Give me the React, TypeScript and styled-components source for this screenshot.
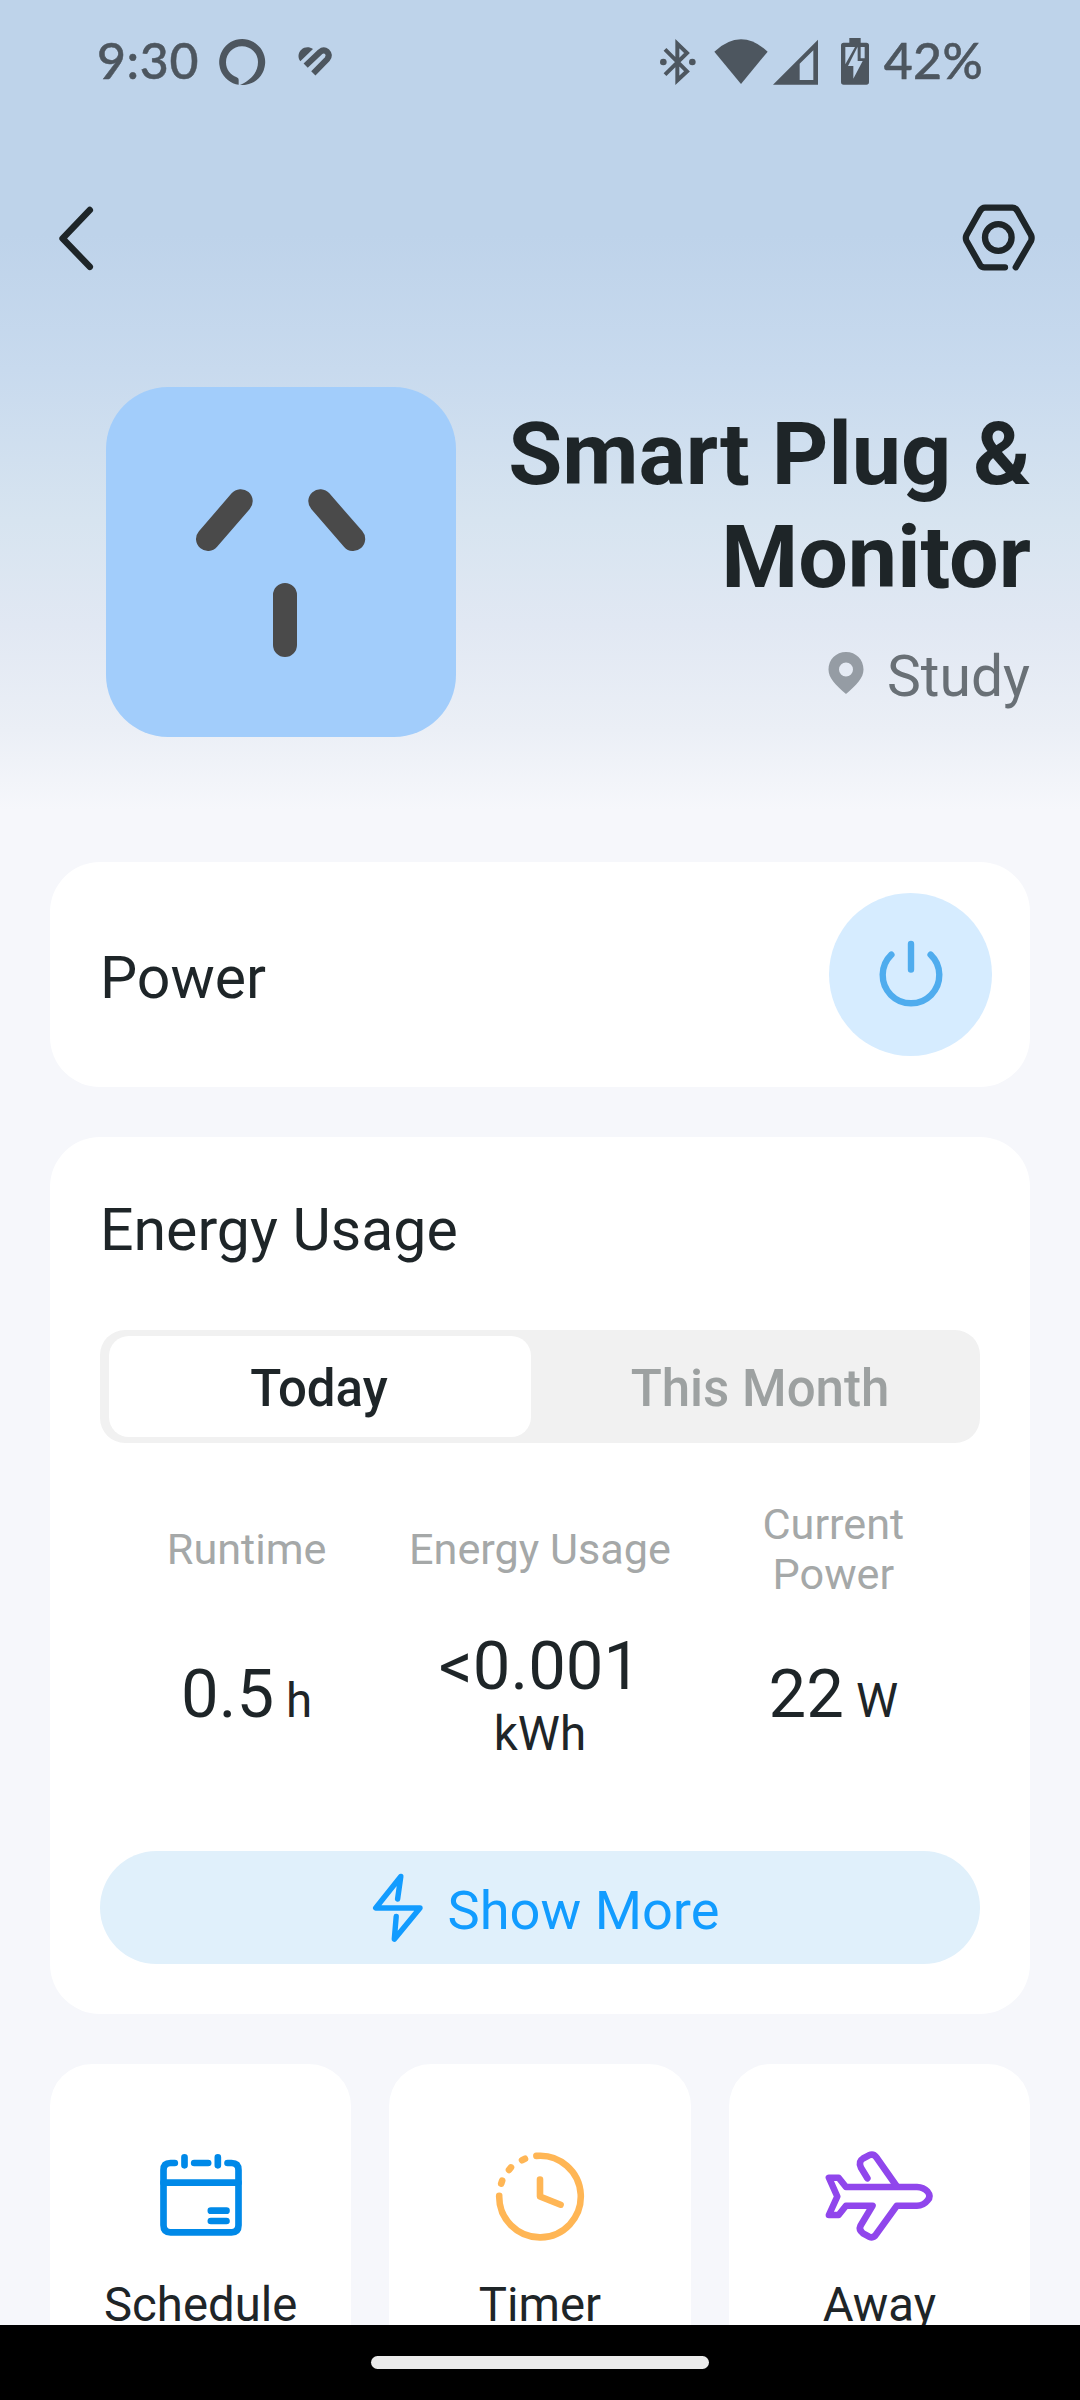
import React from "react";
import styled, { createGlobalStyle } from "styled-components";

const INK = "#1e2528";
const STATUS = "#4d565f";

const GlobalStyle = createGlobalStyle`
  *, *::before, *::after { box-sizing: border-box; }
  body { margin: 0; background: #f6f7fb; }
  button { border: 0; background: none; padding: 0; font: inherit; color: inherit; }
  svg { display: block; flex: none; overflow: visible; }
`;

const Screen = styled.div`
  width: 1080px;
  height: 2400px;
  overflow: hidden;
  display: flex;
  flex-direction: column;
  font-family: Roboto, "Liberation Sans", sans-serif;
  color: ${INK};
  background: linear-gradient(
    180deg,
    #bed3ea 0,
    #bed3ea 235px,
    #c8daee 370px,
    #d7e4f0 520px,
    #e1e8f3 625px,
    #ebeff6 730px,
    #f6f7fb 810px
  );
`;

const Content = styled.main`
  height: 2325px;
  flex: none;
  overflow: hidden;
`;

const StatusBar = styled.header`
  height: 124px;
  padding: 0 97px 1px 97px;
  display: flex;
  justify-content: space-between;
  align-items: center;
  color: ${STATUS};
`;

const StatusGroup = styled.div`
  display: flex;
  align-items: center;
`;

const StatusText = styled.span<{ $spacing?: number }>`
  display: block;
  padding-bottom: 3px;
  font-family: Lato, "Open Sans", sans-serif;
  font-weight: 500;
  font-size: 50px;
  line-height: 60px;
  letter-spacing: ${(p) => p.$spacing ?? 0}px;
  -webkit-text-stroke: 0.5px currentColor;
`;

const IconSlot = styled.span<{ $left: number }>`
  margin-left: ${(p) => p.$left}px;
`;

const NavRow = styled.nav`
  height: 228px;
  padding: 0 46px 0 59px;
  display: flex;
  justify-content: space-between;
  align-items: flex-start;
`;

const NavButton = styled.button<{ $top: number }>`
  padding-top: ${(p) => p.$top}px;
`;

const Hero = styled.section`
  height: 510px;
  padding: 35px 50px 0 106px;
  display: flex;
  justify-content: space-between;
  align-items: flex-start;
`;

const PlugTile = styled.div`
  width: 350px;
  height: 350px;
  border-radius: 62px;
  background: #a2cdfb;
`;

const HeroText = styled.div`
  padding-top: 15px;
  display: flex;
  flex-direction: column;
  align-items: flex-end;
`;

const Title = styled.h1`
  margin: 0 -1px 0 0;
  width: 540px;
  font-size: 88px;
  line-height: 103px;
  font-weight: 700;
  text-align: right;
`;

const Location = styled.div`
  margin-top: 35.6px;
  display: flex;
  align-items: center;
  gap: 23px;
  font-size: 57px;
  line-height: 66px;
  color: #697076;
`;

const PinSlot = styled.span`
  padding-bottom: 7px;
`;

const Card = styled.section`
  margin: 0 50px 50px;
  border-radius: 50px;
  background: #fff;
`;

const PowerCard = styled(Card)`
  height: 225px;
  padding: 0 38px 0 50px;
  display: flex;
  align-items: center;
  justify-content: space-between;
`;

const CardTitle = styled.h2`
  margin: 0;
  padding-top: 6px;
  font-size: 59px;
  line-height: 70px;
  font-weight: 400;
`;

const PowerButton = styled.button`
  width: 163px;
  height: 163px;
  border-radius: 50%;
  background: #d6ecff;
  display: flex;
  align-items: center;
  justify-content: center;
`;

const EnergyCard = styled(Card)`
  height: 877px;
  padding: 52px 50px 0;
`;

const Tabs = styled.div`
  margin-top: 65px;
  height: 113px;
  padding: 6px 9px;
  border-radius: 25px;
  background: #f1f1f1;
  display: flex;
`;

const Tab = styled.button<{ $active?: boolean }>`
  width: ${(p) => (p.$active ? "422px" : "auto")};
  flex: ${(p) => (p.$active ? "none" : "1")};
  padding: ${(p) => (p.$active ? "4px 2px 0 0" : "4px 0 0 18px")};
  border-radius: 20px;
  background: ${(p) => (p.$active ? "#fff" : "transparent")};
  color: ${(p) => (p.$active ? INK : "#9da1a1")};
  font-size: 51px;
  font-weight: 500;
  text-align: center;
`;

const Stats = styled.div`
  margin-top: 54px;
  display: grid;
  grid-template-columns: repeat(3, 1fr);
  grid-template-rows: 100px 136px;
  row-gap: 29px;
  align-items: center;
  justify-items: center;
`;

const StatLabel = styled.div<{ $narrow?: boolean }>`
  width: ${(p) => (p.$narrow ? "200px" : "auto")};
  padding-top: 5px;
  font-size: 43.2px;
  line-height: 50px;
  color: #a5a8a8;
  text-align: center;
`;

const StatValue = styled.div<{ $stacked?: boolean }>`
  padding-top: ${(p) => (p.$stacked ? 2 : 0)}px;
  display: flex;
  flex-direction: ${(p) => (p.$stacked ? "column" : "row")};
  align-items: ${(p) => (p.$stacked ? "center" : "baseline")};
  gap: ${(p) => (p.$stacked ? 1 : 12)}px;
  font-size: 67px;
  line-height: 78px;
`;

const Unit = styled.span`
  font-size: 47.5px;
  line-height: 57px;
`;

const ShowMore = styled.button`
  margin-top: 89px;
  padding-left: 12px;
  width: 100%;
  height: 113px;
  border-radius: 57px;
  background: #e0f0fb;
  color: #129cff;
  display: flex;
  align-items: center;
  justify-content: center;
  gap: 25px;
  font-size: 54.2px;
`;

const ShowMoreText = styled.span`
  padding-top: 6px;
  line-height: 64px;
`;

const Actions = styled.div`
  padding: 0 50px;
  display: grid;
  grid-template-columns: repeat(3, 1fr);
  gap: 38px;
`;

const ActionTile = styled.button`
  height: 301px;
  padding-top: 82px;
  border-radius: 42px;
  background: #fff;
  display: flex;
  flex-direction: column;
  align-items: center;
`;

const ActionLabel = styled.span`
  margin-top: 31px;
  font-size: 47.3px;
  line-height: 56px;
`;

const SystemNav = styled.footer`
  flex: 1;
  background: #000;
  display: flex;
  align-items: center;
  justify-content: center;
`;

const HomePill = styled.div`
  width: 338px;
  height: 13px;
  border-radius: 7px;
  background: #ebebeb;
`;

const AssistantIcon = () => (
  <svg width="46" height="46" viewBox="478 87 138 138" fill={STATUS}>
    <path d="M537 224.500A69 69 0 1 1 541 225C566 214 595 192 595 156A48 48 0 1 0 499 157C499 180 513 195 531 202Q537 204 537 209Z" />
  </svg>
);

const HeartIcon = () => (
  <svg width="34" height="29" viewBox="716 115 102 87" fill="none" stroke={STATUS} strokeWidth="18">
    <path d="M723 158C714 145 717 131 726 123C736 114 750 114 761 121Z" fill={STATUS} stroke="none" />
    <path d="M739 171L782 130Q793 121 803 129Q813 139 804 151L762 194" />
  </svg>
);

const BluetoothIcon = () => (
  <svg width="36" height="42" viewBox="119 91 108 126" fill="none" stroke={STATUS} strokeWidth="12">
    <path d="M134 116L200 182L171 209V99L200 127L134 192" />
    <circle cx="129" cy="154" r="10" fill={STATUS} stroke="none" />
    <circle cx="216" cy="154" r="10" fill={STATUS} stroke="none" />
  </svg>
);

const WifiIcon = () => (
  <svg width="54" height="46" viewBox="282 84 162 138" fill={STATUS}>
    <path d="M283 122Q363 48 443 122L363 219Z" />
  </svg>
);

const SignalIcon = () => (
  <svg width="45" height="46" viewBox="458 84 135 138" fill={STATUS} fillRule="evenodd">
    <path d="M458 221L593 86V221ZM538 158V207H579V118Z" />
  </svg>
);

const BatteryIcon = () => (
  <svg width="28" height="47" viewBox="663 81 84 141">
    <path
      fill={STATUS}
      d="M688 81H722V95H739Q747 95 747 103V213Q747 221 739 221H671Q663 221 663 213V103Q663 95 671 95H688Z"
    />
    <path
      fill="#bed3ea"
      d="M676 108H705L676 160ZM713 108V150H728L700 203V165H684L711 111ZM722 108H734V142H722Z"
    />
  </svg>
);

const BackIcon = () => (
  <svg width="34" height="63" viewBox="59 207 34 63" fill="none" stroke={INK} strokeWidth="6.500" strokeLinecap="round" strokeLinejoin="round">
    <path d="M89.800 210L62.600 238.500L89.800 266.800" />
  </svg>
);

const SettingsIcon = () => (
  <svg width="72" height="66" viewBox="962 204 72 66" fill="none" stroke={INK} strokeWidth="6.300" strokeLinecap="round" strokeLinejoin="round">
    <path d="M1005 267.300H984.500Q981.500 267.300 980 264.800L966.500 241Q965.200 238 966.500 235L980 211Q982 207.700 985 207.700H1012.500Q1015.500 207.700 1017.500 211L1031 235Q1032.200 238 1031 241L1015.700 267.300" />
    <circle cx="998.300" cy="237.500" r="13.300" />
  </svg>
);

const PlugFace = () => (
  <svg width="350" height="350" viewBox="106 387 350 350" stroke="#4a4a4a" strokeWidth="24" strokeLinecap="round">
    <path d="M240.700 501.200L208 539M320.300 501.200L353.200 539M285 595V645" />
  </svg>
);

const PinIcon = () => (
  <svg width="36" height="42" viewBox="0 0 36 42">
    <path
      fill="#959ca4"
      fillRule="evenodd"
      d="M18 0C8 0 0.500 7.500 0.500 17.500C0.500 26 7.500 33 18 42C28.500 33 35.500 26 35.500 17.500C35.500 7.500 28 0 18 0ZM18 10.500A7 7 0 1 1 18 24.500A7 7 0 1 1 18 10.500Z"
    />
  </svg>
);

const PowerIcon = () => (
  <svg width="64" height="68" viewBox="-32 -34 64 68" fill="none" stroke="#4facee" strokeWidth="6.400" strokeLinecap="round">
    <path d="M0 -31V-5.500M-19.600 -20.400A28.300 28.300 0 1 0 19.600 -20.400" />
  </svg>
);

const BoltIcon = () => (
  <svg width="50" height="69" viewBox="373 1872.500 50 69" fill="none" stroke="#129cff" strokeWidth="5.400" strokeLinecap="round" strokeLinejoin="round">
    <path d="M397.600 1898.500L400.800 1876L375.700 1907.500H420L394.300 1938.700L396.200 1916" />
  </svg>
);

const CalendarIcon = () => (
  <svg width="108" height="100" viewBox="319.500 318 324 300" fill="none" stroke="#0089e8" strokeWidth="20" strokeLinecap="round">
    <path d="M403 369H390Q369 369 369 390V556Q369 577 390 577H573Q594 577 594 556V390Q594 369 573 369H561" />
    <path d="M369 428H594M461 369H503M432 352V376M532 352V376M511 512H558M511 543H558" />
  </svg>
);

const TimerIcon = () => (
  <svg width="108" height="100" viewBox="-54 -50.500 108 100" fill="none" stroke="#ffb655" strokeWidth="6.600" strokeLinecap="round" strokeLinejoin="round">
    <path d="M-3.600 -40.600A40.800 40.800 0 1 1 -40.800 -0.800" />
    <path d="M-18 -36.300L-15 -37.700M-31 -26.600L-29 -29.100M-38.800 -12.900L-37.800 -15.900" />
    <path d="M0 -17V0L20.600 8.200" />
  </svg>
);

const PlaneIcon = () => (
  <svg width="108" height="100" viewBox="825 2146 108 100" fill="none" stroke="#9046ec" strokeWidth="6.600" strokeLinecap="round" strokeLinejoin="round">
    <path d="M828.900 2177.700H838.600L846 2187H917Q923.500 2187.300 927.500 2191.500Q931.500 2196.300 927.500 2200.500Q923.500 2205.600 917 2205.700H896.800L876 2234.500Q873.500 2238.500 869 2236.700L863 2233.300Q858.500 2230 860.500 2225.700L872.500 2205.700H846L838.600 2215H828.900L837.300 2196.500Z" />
    <path d="M867.400 2178.300L861 2167.700Q858 2161.500 863 2158.500L868.900 2155.300Q873.500 2153.300 876.500 2157.500L896.500 2186" />
  </svg>
);

const actions = [
  { label: "Schedule", Icon: CalendarIcon },
  { label: "Timer", Icon: TimerIcon },
  { label: "Away", Icon: PlaneIcon },
];

const stats = [
  { label: "Runtime", value: "0.5", unit: "h" },
  { label: "Energy Usage", value: "<0.001", unit: "kWh", stacked: true },
  { label: "Current Power", value: "22", unit: "W", narrow: true },
];

export default function App() {
  return (
    <Screen>
      <GlobalStyle />
      <Content>
        <StatusBar>
          <StatusGroup>
            <StatusText $spacing={0.6}>9:30</StatusText>
            <IconSlot $left={20}><AssistantIcon /></IconSlot>
            <IconSlot $left={33}><HeartIcon /></IconSlot>
          </StatusGroup>
          <StatusGroup>
            <BluetoothIcon />
            <IconSlot $left={18}><WifiIcon /></IconSlot>
            <IconSlot $left={5}><SignalIcon /></IconSlot>
            <IconSlot $left={23}><BatteryIcon /></IconSlot>
            <IconSlot $left={15}><StatusText $spacing={0.3}>42%</StatusText></IconSlot>
          </StatusGroup>
        </StatusBar>
        <NavRow>
          <NavButton $top={83} aria-label="Back"><BackIcon /></NavButton>
          <NavButton $top={80} aria-label="Settings"><SettingsIcon /></NavButton>
        </NavRow>
        <Hero>
          <PlugTile><PlugFace /></PlugTile>
          <HeroText>
            <Title>Smart Plug &amp; Monitor</Title>
            <Location>
              <PinSlot><PinIcon /></PinSlot>
              Study
            </Location>
          </HeroText>
        </Hero>
        <PowerCard>
          <CardTitle>Power</CardTitle>
          <PowerButton aria-label="Toggle power"><PowerIcon /></PowerButton>
        </PowerCard>
        <EnergyCard>
          <CardTitle>Energy Usage</CardTitle>
          <Tabs>
            <Tab $active>Today</Tab>
            <Tab>This Month</Tab>
          </Tabs>
          <Stats>
            {stats.map((s) => (
              <StatLabel key={s.label} $narrow={s.narrow}>{s.label}</StatLabel>
            ))}
            {stats.map((s) => (
              <StatValue key={s.label} $stacked={s.stacked}>
                {s.value}
                <Unit>{s.unit}</Unit>
              </StatValue>
            ))}
          </Stats>
          <ShowMore>
            <BoltIcon />
            <ShowMoreText>Show More</ShowMoreText>
          </ShowMore>
        </EnergyCard>
        <Actions>
          {actions.map(({ label, Icon }) => (
            <ActionTile key={label}>
              <Icon />
              <ActionLabel>{label}</ActionLabel>
            </ActionTile>
          ))}
        </Actions>
      </Content>
      <SystemNav><HomePill /></SystemNav>
    </Screen>
  );
}
